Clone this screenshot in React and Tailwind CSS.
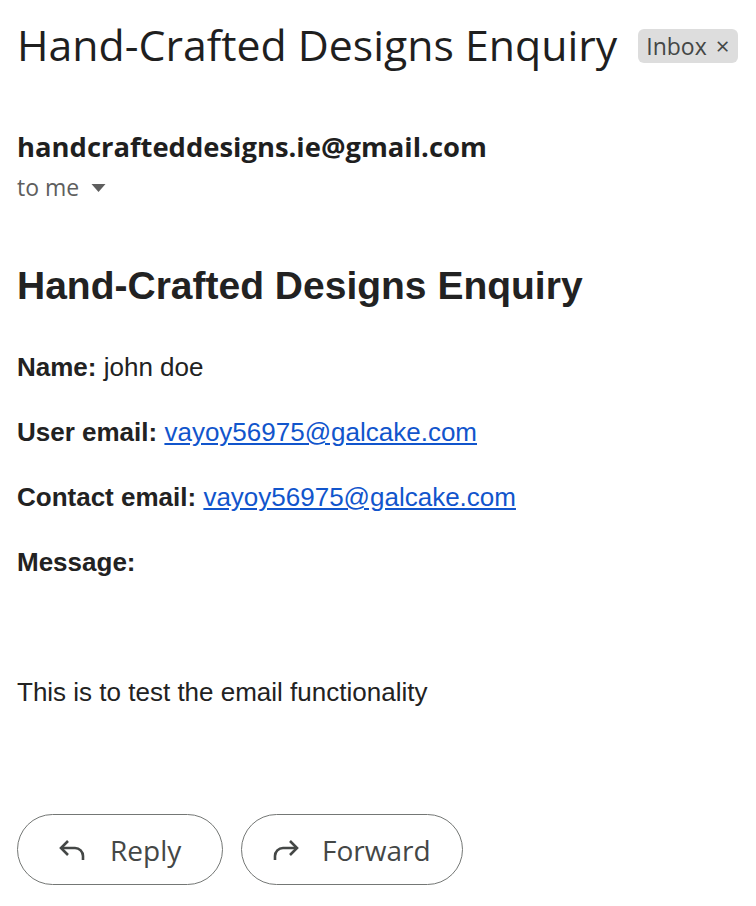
export default function App() {
  return (
    <div className="min-h-screen bg-white text-[#1f1f1f]">
      <div className="flex items-center pl-[17px] pt-[17px]">
        <h1 className="text-[42.8px] leading-[56px] font-normal" style={{ fontFamily: '"Open Sans", sans-serif' }}>
          Hand-Crafted Designs Enquiry
        </h1>
        <span
          className="ml-[21px] mt-[2px] flex h-[34px] items-center gap-[9px] rounded-[6px] bg-[#dddddd] pl-[8px] pr-[9px] text-[23px] text-[#444746]"
          style={{ fontFamily: '"Open Sans", sans-serif' }}
        >
          Inbox
          <span className="text-[24px] leading-none">×</span>
        </span>
      </div>

      <div className="pl-[17px] pt-[58px]" style={{ fontFamily: '"Open Sans", sans-serif' }}>
        <div className="text-[27.4px] font-bold leading-[32px]">handcrafteddesigns.ie@gmail.com</div>
        <div className="mt-[9px] flex items-center gap-[12px] text-[23px] leading-[30px] text-[#5e5e5e]">
          to me
          <svg width="15" height="8" viewBox="0 0 14 8" className="mt-[2px]">
            <path d="M0 0h14L7 8z" fill="#5e5e5e" />
          </svg>
        </div>
      </div>

      <div className="pl-[17px] pt-[61px] text-[26px] leading-[30px] text-[#222]" style={{ fontFamily: '"Liberation Sans", Arial, sans-serif' }}>
        <h2 className="text-[39px] font-bold leading-[45px]">Hand-Crafted Designs Enquiry</h2>
        <p className="mt-[44px]">
          <b>Name:</b> john doe
        </p>
        <p className="mt-[35px]">
          <b>User email:</b>{' '}
          <a href="#" className="text-[#1155cc] underline">vayoy56975@galcake.com</a>
        </p>
        <p className="mt-[35px]">
          <b>Contact email:</b>{' '}
          <a href="#" className="text-[#1155cc] underline">vayoy56975@galcake.com</a>
        </p>
        <p className="mt-[35px]">
          <b>Message:</b>
        </p>
        <p className="mt-[100px]">This is to test the email functionality</p>
      </div>

      <div className="flex gap-[18px] pl-[17px] pt-[107px]" style={{ fontFamily: '"Open Sans", sans-serif' }}>
        <button className="flex h-[71px] w-[206px] items-center gap-[24px] rounded-full border-[1.5px] border-[#747775] pl-[40px] text-[28px] text-[#444746]">
          <svg width="28" height="24" viewBox="0 0 28 24" fill="none" stroke="#444746" strokeWidth="2.6">
            <path d="M10 3L3 10l7 7" />
            <path d="M3 10h14a8 8 0 0 1 8 8v4" />
          </svg>
          Reply
        </button>
        <button className="flex h-[71px] w-[222px] items-center gap-[22px] rounded-full border-[1.5px] border-[#747775] pl-[30px] text-[28px] text-[#444746]">
          <svg width="28" height="24" viewBox="0 0 28 24" fill="none" stroke="#444746" strokeWidth="2.6">
            <path d="M18 3l7 7-7 7" />
            <path d="M25 10H11a8 8 0 0 0-8 8v4" />
          </svg>
          Forward
        </button>
      </div>
    </div>
  )
}
